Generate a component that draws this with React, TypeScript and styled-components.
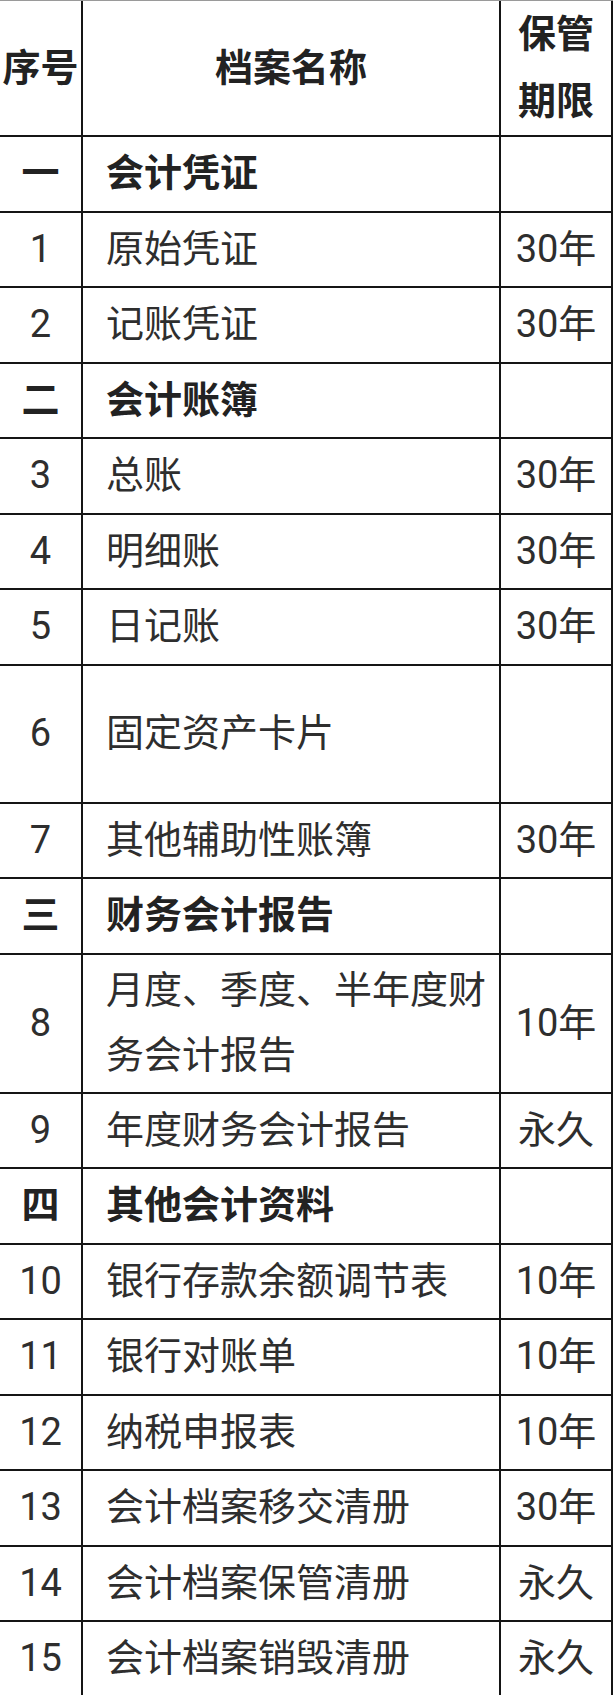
import * as React from 'react'
import styled, { createGlobalStyle } from 'styled-components'

const GlobalStyle = createGlobalStyle`
  html, body {
    margin: 0;
    padding: 0;
    background: #fff;
  }
  body {
    font-family: Roboto, "Noto Sans CJK SC", "Noto Sans", sans-serif;
    color: #2e2e2e;
  }
`

const Sheet = styled.div`
  width: 613px;
  border-top: 1px solid #9a9a9a;
  box-sizing: border-box;
  overflow: hidden;
`

const Row = styled.div<{ $height: number }>`
  display: grid;
  grid-template-columns: 83px 418px 112px;
  height: ${(p) => p.$height}px;
  border-bottom: 2px solid #151515;
  box-sizing: border-box;
`

const Cell = styled.div<{ $bold?: boolean }>`
  display: flex;
  align-items: center;
  justify-content: center;
  border-right: 2px solid #151515;
  box-sizing: border-box;
  font-size: 38px;
  line-height: 65px;
  font-weight: ${(p) => (p.$bold ? 700 : 400)};
  color: ${(p) => (p.$bold ? '#222' : '#2e2e2e')};
`

const NameCell = styled(Cell)`
  justify-content: flex-start;
  padding: 0 6px 0 23px;
`

const HeadCell = styled(Cell)`
  font-weight: 700;
  color: #222;
  text-align: center;
  line-height: 67px;
`

type Item = {
  no: string
  name: string
  term?: string
  section?: boolean
  height?: number
}

const items: Item[] = [
  { no: '一', name: '会计凭证', section: true },
  { no: '1', name: '原始凭证', term: '30年' },
  { no: '2', name: '记账凭证', term: '30年' },
  { no: '二', name: '会计账簿', section: true },
  { no: '3', name: '总账', term: '30年' },
  { no: '4', name: '明细账', term: '30年' },
  { no: '5', name: '日记账', term: '30年' },
  { no: '6', name: '固定资产卡片', height: 138 },
  { no: '7', name: '其他辅助性账簿', term: '30年' },
  { no: '三', name: '财务会计报告', section: true },
  { no: '8', name: '月度、季度、半年度财务会计报告', term: '10年', height: 139 },
  { no: '9', name: '年度财务会计报告', term: '永久' },
  { no: '四', name: '其他会计资料', section: true },
  { no: '10', name: '银行存款余额调节表', term: '10年' },
  { no: '11', name: '银行对账单', term: '10年' },
  { no: '12', name: '纳税申报表', term: '10年' },
  { no: '13', name: '会计档案移交清册', term: '30年' },
  { no: '14', name: '会计档案保管清册', term: '永久' },
  { no: '15', name: '会计档案销毁清册', term: '永久' },
]

const App: React.FC = () => (
  <>
    <GlobalStyle />
    <Sheet>
      <Row $height={136}>
        <HeadCell>序号</HeadCell>
        <HeadCell>档案名称</HeadCell>
        <HeadCell>
          保管
          <br />
          期限
        </HeadCell>
      </Row>
      {items.map((it) => (
        <Row key={it.no} $height={it.height ?? 75.5}>
          <Cell $bold={it.section}>{it.no}</Cell>
          <NameCell $bold={it.section}>{it.name}</NameCell>
          <Cell>{it.term}</Cell>
        </Row>
      ))}
    </Sheet>
  </>
)

export default App
